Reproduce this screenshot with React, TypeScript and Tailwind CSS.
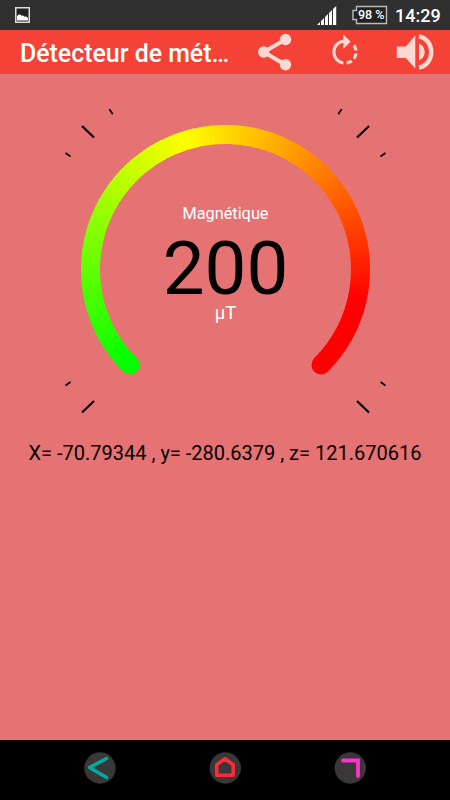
import React, { FC } from 'react';

const CENTER = { x: 225.5, y: 195.5 };
const RADIUS = 135;
const START = 135;
const SWEEP = 270;
const STEP = 2;

const point = (angle: number) => {
  const rad = (angle * Math.PI) / 180;
  return `${(CENTER.x + RADIUS * Math.cos(rad)).toFixed(2)} ${(
    CENTER.y +
    RADIUS * Math.sin(rad)
  ).toFixed(2)}`;
};

// green -> yellow -> red, the last part of the arc stays red
const colorAt = (deg: number) => {
  if (deg <= 118) return `rgb(${Math.round((deg / 118) * 255)},255,0)`;
  const t = Math.min((deg - 118) / 120, 1);
  return `rgb(255,${Math.round((1 - t) * 255)},0)`;
};

const segments = Array.from({ length: SWEEP / STEP }, (_, i) => {
  const from = i * STEP;
  const to = Math.min(from + STEP + 0.6, SWEEP);
  return {
    d: `M${point(START + from)}A${RADIUS} ${RADIUS} 0 0 1 ${point(START + to)}`,
    color: colorAt(from + STEP / 2),
  };
});

const StatusBar: FC = () => (
  <header className="flex h-[30px] items-center bg-[#303030] text-white">
    <svg className="ml-[15px] h-4 w-[15px] shrink-0" viewBox="0 0 15 16">
      <rect x=".75" y=".75" width="13.500" height="14.500" fill="#222" stroke="#ddd" strokeWidth="1.500" />
      <path d="M2 13.500V9.500C3.500 7 5.500 7 6.500 9c1-.8 2-.5 2.800.8 1.200-.8 2.700-.3 3.700 1.200v2.500z" fill="#fff" />
    </svg>
    <svg className="ml-[287px] h-5 w-5 shrink-0" viewBox="0 0 20 20" fill="#fff">
      <path d="M0 20l3-3v3zM4 20v-4l3-3v7zM8 20v-8l3-3v11zM12 20V8l3-3v15zM16 20V4l3.200-3v19z" />
    </svg>
    <div className="relative ml-[14px] h-[20px] w-[37px] shrink-0">
      <svg className="absolute inset-0 h-full w-full" viewBox="0 0 37 20">
        <path
          d="M5.500 1.500H35.500v17H5.500v-4H2V5.500h3.500z"
          fill="#222"
          stroke="#bbb"
          strokeWidth="1.400"
        />
      </svg>
      <span className="absolute left-[7px] top-0 whitespace-nowrap text-[12.500px] font-medium leading-[20px]">
        98 %
      </span>
    </div>
    <span className="ml-[7px] pt-px text-[18px] font-medium leading-[30px]">
      14:29
    </span>
  </header>
);

const AppBar: FC = () => (
  <div className="flex h-[44px] items-center bg-[#f44336] text-white">
    <h1 className="ml-5 w-[215px] shrink-0 whitespace-nowrap pt-[3px] text-[24.900px] font-medium leading-[41px]">
      Détecteur de mét…
    </h1>
    <svg
      className="ml-[22px] h-[38px] w-[36px] shrink-0"
      viewBox="0 0 36 38"
      fill="#ffd7d3"
    >
      <path
        d="M28.500 6.500L6.700 19l21.800 12.700"
        fill="none"
        stroke="#ffd7d3"
        strokeWidth="4"
      />
      <circle cx="28.500" cy="6.500" r="5.700" />
      <circle cx="6.700" cy="19" r="5.700" />
      <circle cx="28.500" cy="31.700" r="5.700" />
    </svg>
    <svg
      className="ml-[33px] h-[38px] w-[38px] shrink-0"
      viewBox="0 0 24 24"
      fill="#ffd7d3"
    >
      <path d="M15.550 5.550L11 1v3.070C7.060 4.560 4 7.920 4 12s3.050 7.440 7 7.930v-2.020c-2.840-.48-5-2.940-5-5.910s2.160-5.430 5-5.910V10l4.550-4.450zM19.930 11c-.17-1.390-.72-2.730-1.620-3.890l-1.420 1.420c.54.75.88 1.600 1.020 2.470h2.020zM13 17.900v2.020c1.390-.17 2.740-.71 3.900-1.610l-1.440-1.440c-.75.54-1.590.89-2.460 1.030zm3.890-2.420l1.420 1.410c.9-1.160 1.450-2.500 1.620-3.890h-2.020c-.14.87-.48 1.720-1.020 2.480z" />
    </svg>
    <svg
      className="ml-[32px] h-[38px] w-[38px] shrink-0"
      viewBox="0 0 38 38"
      fill="#ffd7d3"
    >
      <path d="M.8 13.500h9l9.500-11v33l-9.500-10.500h-9zM23 10.500c3.500 1.500 5.700 4.800 5.700 8.500s-2.200 7-5.700 8.500z" />
      <path
        d="M23 3.300C30 4.500 35.300 11 35.300 19S30 33.500 23 34.700"
        fill="none"
        stroke="#ffd7d3"
        strokeWidth="4.400"
      />
    </svg>
  </div>
);

const Gauge: FC = () => (
  <section className="relative h-[360px] w-full">
    <svg className="absolute inset-0 h-full w-full" viewBox="0 0 450 360">
      <g stroke="#000" strokeWidth="2.200">
        <path d="M82 52l12 11.500M369 52l-12 11.500M82 338.500L94 327M369 338.500L357 327" />
        <path
          d="M109.300 35l3.400 5.300M341.700 35l-3.400 5.300M65.500 79l5 3.500M385.500 79l-5 3.500M65.500 311.500l5-3.500M385.500 311.500l-5-3.500"
          strokeWidth="1.600"
        />
      </g>
      <g fill="none" strokeWidth="19">
        <path d={`M${point(135)}h.01`} stroke="#00ff00" strokeLinecap="round" />
        <path d={`M${point(405)}h.01`} stroke="#ff0000" strokeLinecap="round" />
        {segments.map(({ d, color }) => (
          <path key={d} d={d} stroke={color} />
        ))}
      </g>
    </svg>
    <div className="relative flex flex-col items-center pl-px pt-[128px]">
      <span className="text-[16.300px] leading-[24px] text-white">
        Magnétique
      </span>
      <span className="mt-[7px] text-[74.500px] leading-[71px] text-black">
        200
      </span>
      <span className="text-[18.500px] leading-[18px] text-white">µT</span>
    </div>
  </section>
);

const NavBar: FC = () => (
  <nav className="flex h-[60px] items-center justify-between bg-black px-[84px] pb-1">
    <svg className="h-8 w-8" viewBox="0 0 32 32" fill="none">
      <circle cx="16" cy="16" r="15.700" fill="#393738" />
      <path
        d="M22.500 6.500L5.500 15.500l17 10"
        stroke="#00aba0"
        strokeWidth="3.500"
        strokeLinecap="round"
        strokeLinejoin="round"
      />
    </svg>
    <svg className="h-8 w-8" viewBox="0 0 32 32" fill="none">
      <circle cx="16.300" cy="16" r="15.700" fill="#393738" />
      <path
        d="M16 6.700l8.200 6v10.500H7.700V12.700z"
        stroke="#ff2a38"
        strokeWidth="3.600"
        strokeLinejoin="round"
      />
    </svg>
    <svg className="h-8 w-8" viewBox="0 0 32 32" fill="none">
      <circle cx="16.300" cy="16" r="15.700" fill="#393738" />
      <path
        d="M9 8.500h15v15.500"
        stroke="#ff30cf"
        strokeWidth="3.800"
        strokeLinecap="round"
      />
    </svg>
  </nav>
);

const App: FC = () => (
  <div className="flex h-[800px] w-[450px] flex-col overflow-hidden bg-[#e57373] font-['Roboto',sans-serif]">
    <StatusBar />
    <AppBar />
    <main className="flex-1">
      <Gauge />
      <p className="mt-[4px] whitespace-nowrap text-center text-[20px] leading-[30px] text-black">
        X= -70.79344 , y= -280.6379 , z= 121.670616
      </p>
    </main>
    <NavBar />
  </div>
);

export default App;
